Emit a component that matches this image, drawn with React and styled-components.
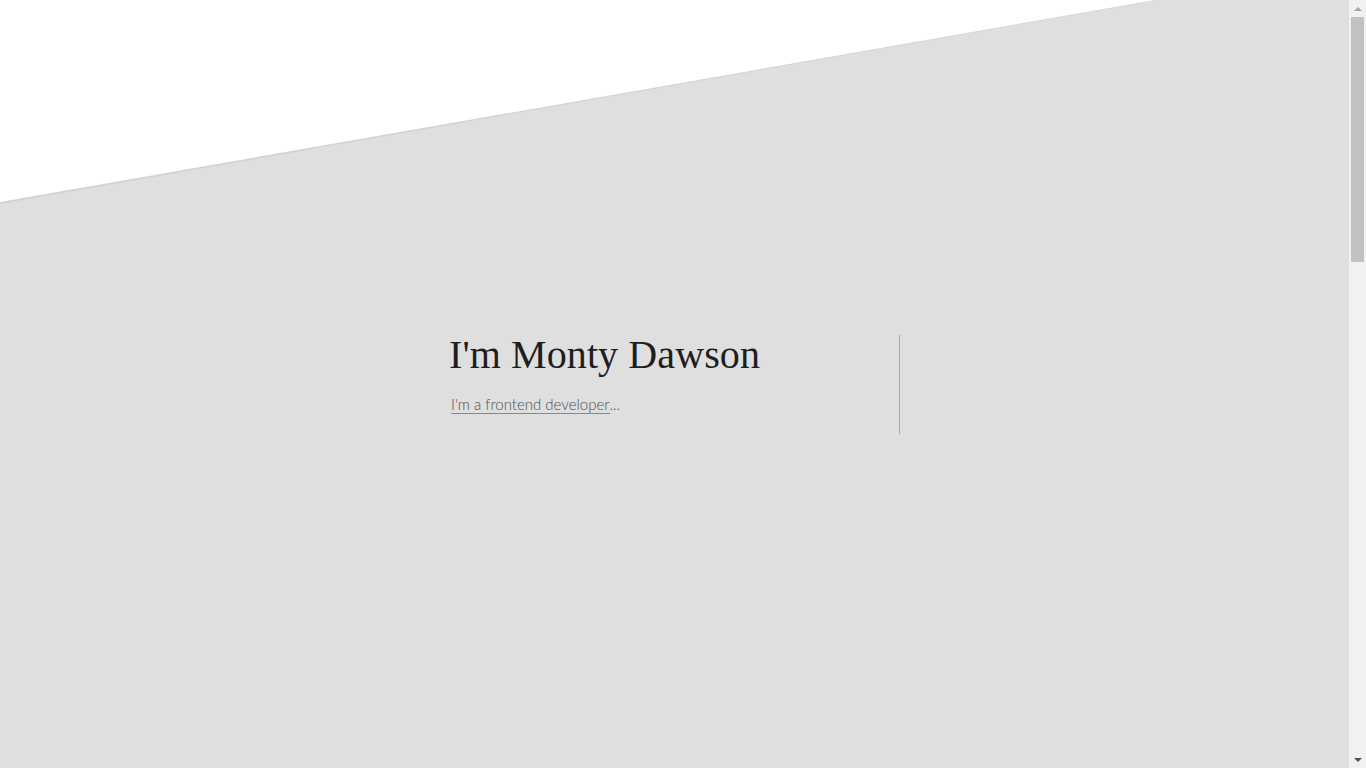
import React from "react";
import styled, { createGlobalStyle } from "styled-components";

const GlobalStyle = createGlobalStyle`
  html, body {
    margin: 0;
    padding: 0;
    background: #dfdfdf;
  }
  html { scrollbar-width: none; }
  html::-webkit-scrollbar { display: none; }
  * { box-sizing: border-box; }
`;

const Page = styled.main`
  position: relative;
  margin-right: 17px;
  min-height: 2300px;
  background: #dfdfdf;
  overflow: hidden;

  &::before,
  &::after {
    content: "";
    position: absolute;
    top: 0;
    left: 0;
    width: 100%;
    height: 210px;
    pointer-events: none;
  }
  &::before {
    background: #d3d3d3;
    clip-path: polygon(0 0, 1158px 0, 0 204px);
  }
  &::after {
    background: #ffffff;
    clip-path: polygon(0 0, 1155px 0, 0 202px);
  }
`;

const Hero = styled.section`
  position: relative;
  z-index: 1;
  display: flex;
  justify-content: center;
  padding-top: 335px;
`;

const Intro = styled.div`
  width: 451px;
  height: 99px;
  border-right: 1px solid #a9a9a9;
  display: flex;
  flex-direction: column;
  align-items: flex-start;
`;

const Title = styled.h1`
  margin: 0;
  font-family: "Liberation Serif", "Times New Roman", serif;
  font-weight: 400;
  font-size: 40px;
  line-height: 1;
  color: #1e1e1e;
  letter-spacing: 0.1px;
`;

const Tagline = styled.p`
  margin: 20px 0 0 2px;
  font-family: Lato, "Liberation Sans", sans-serif;
  font-weight: 300;
  font-size: 15px;
  line-height: 18px;
  color: #4e4e4e;
`;

const Typed = styled.span`
  display: inline-block;
  line-height: 17px;
  border-bottom: 1px solid #17b4ce;
`;

const Scrollbar = styled.div`
  position: fixed;
  top: 0;
  right: 0;
  width: 17px;
  height: 100vh;
  background: #f1f1f1;
  display: flex;
  flex-direction: column;
  align-items: center;
  z-index: 10;
`;

const Arrow = styled.div`
  width: 17px;
  height: 17px;
  display: flex;
  align-items: center;
  justify-content: center;

  &::before {
    content: "";
    border-left: 4px solid transparent;
    border-right: 4px solid transparent;
    ${(p) =>
      p.$down
        ? "border-top: 4px solid #505050;"
        : "border-bottom: 4px solid #a3a3a3;"}
  }
`;

const Track = styled.div`
  flex: 1;
  width: 100%;
  display: flex;
  justify-content: center;
`;

const Thumb = styled.div`
  width: 13px;
  height: 245px;
  background: #c1c1c1;
`;

export default function App() {
  return (
    <>
      <GlobalStyle />
      <Page>
        <Hero>
          <Intro>
            <Title>I'm Monty Dawson</Title>
            <Tagline>
              <Typed>I'm a frontend developer</Typed>...
            </Tagline>
          </Intro>
        </Hero>
      </Page>
      <Scrollbar aria-hidden="true">
        <Arrow />
        <Track>
          <Thumb />
        </Track>
        <Arrow $down />
      </Scrollbar>
    </>
  );
}
